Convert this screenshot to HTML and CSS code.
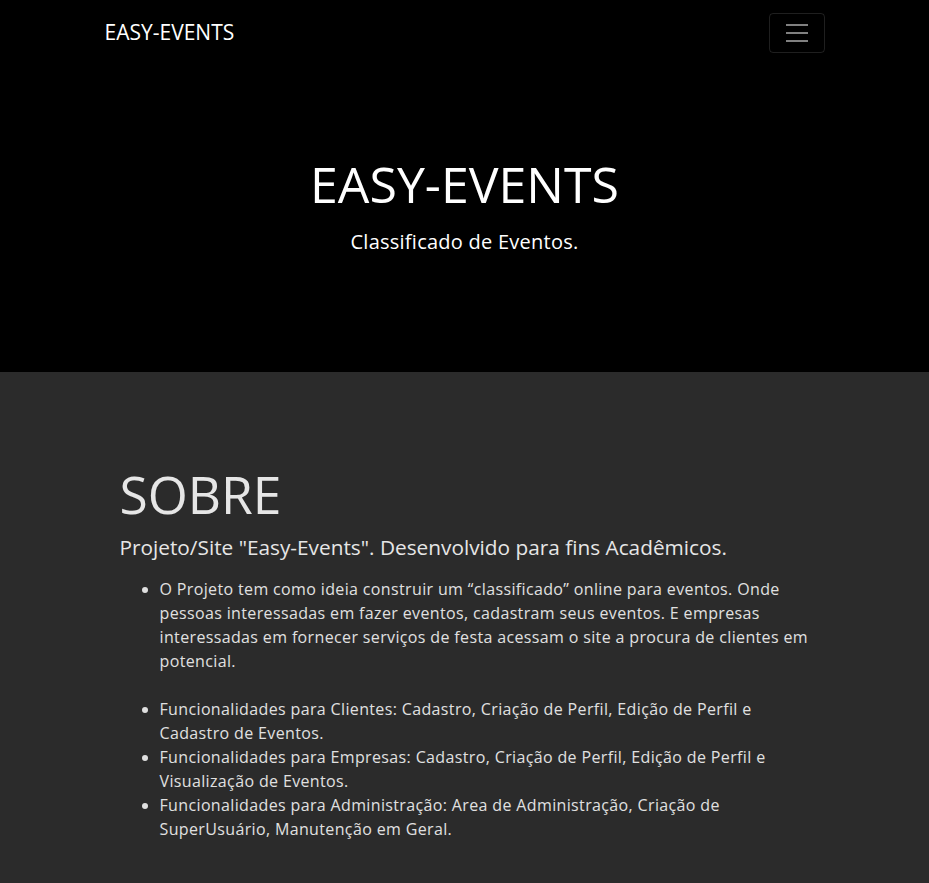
FILE: index.html
```html
<!DOCTYPE html>
<html lang="pt-br">
<head>
<meta charset="utf-8">
<title>Easy-Events</title>
<link rel="stylesheet" href="styles.css">
</head>
<body>
<header class="top">
  <nav class="navbar">
    <a class="brand" href="#">EASY-EVENTS</a>
    <button class="toggler" type="button" aria-label="Menu">
      <svg width="30" height="30" viewBox="0 0 30 30"><path stroke="rgba(255,255,255,0.5)" stroke-width="2" stroke-linecap="butt" d="M4 7h22M4 15h22M4 23h22"/></svg>
    </button>
  </nav>
  <div class="hero">
    <h1 class="hero-title">EASY-EVENTS</h1>
    <p class="hero-sub">Classificado de Eventos.</p>
  </div>
</header>
<section class="about">
  <div class="container">
    <h2 class="about-title">SOBRE</h2>
    <p class="about-lead">Projeto/Site "Easy-Events". Desenvolvido para fins Acadêmicos.</p>
    <ul class="about-list">
      <li>O Projeto tem como ideia construir um “classificado” online para eventos. Onde pessoas interessadas em fazer eventos, cadastram seus eventos. E empresas interessadas em fornecer serviços de festa acessam o site a procura de clientes em potencial.<br><br></li>
      <li>Funcionalidades para Clientes: Cadastro, Criação de Perfil, Edição de Perfil e Cadastro de Eventos.</li>
      <li>Funcionalidades para Empresas: Cadastro, Criação de Perfil, Edição de Perfil e Visualização de Eventos.</li>
      <li>Funcionalidades para Administração: Area de Administração, Criação de SuperUsuário, Manutenção em Geral.</li>
    </ul>
  </div>
</section>
</body>
</html>
```

FILE: styles.css
```css
* { box-sizing: border-box; }
html, body { margin: 0; padding: 0; }
body {
  font-family: "Open Sans", "DejaVu Sans", sans-serif;
  font-size: 16px;
  line-height: 24px;
  background: #2b2b2b;
  color: #e0e0e0;
}
.top { background: #000; height: 372px; }
.navbar {
  width: 720px;
  margin: 0 auto;
  height: 66px;
  display: flex;
  align-items: center;
  justify-content: space-between;
}
.brand {
  color: #fff;
  text-decoration: none;
  font-size: 21px;
  line-height: 30px;
  margin-top: -2px;
}
.toggler {
  width: 56px;
  height: 40px;
  background: transparent;
  border: 1px solid rgba(255,255,255,0.12);
  border-radius: 4px;
  padding: 0;
  display: flex;
  align-items: center;
  justify-content: center;
  margin-top: -1px;
}
.toggler svg { display: block; }
.hero { text-align: center; color: #fff; padding-top: 88px; }
.hero-title {
  margin: 0;
  font-weight: 400;
  font-size: 50px;
  line-height: 60px;
}
.hero-sub {
  margin: 13px 0 0;
  font-size: 20px;
  line-height: 30px;
  letter-spacing: 0.25px;
}
.about { padding-top: 90px; padding-bottom: 40px; }
.container { width: 720px; margin: 0 auto; padding: 0 15px; }
.about-title {
  margin: 0;
  font-weight: 400;
  font-size: 51.5px;
  line-height: 64px;
  color: #e6e6e6;
}
.about-lead {
  margin: 6px 0 15px;
  font-size: 20.8px;
  line-height: 30px;
  color: #e6e6e6;
}
.about-list { margin: 0; padding-left: 40px; }
.about-list li { font-size: 16px; line-height: 24px; letter-spacing: 0.36px; }
```
